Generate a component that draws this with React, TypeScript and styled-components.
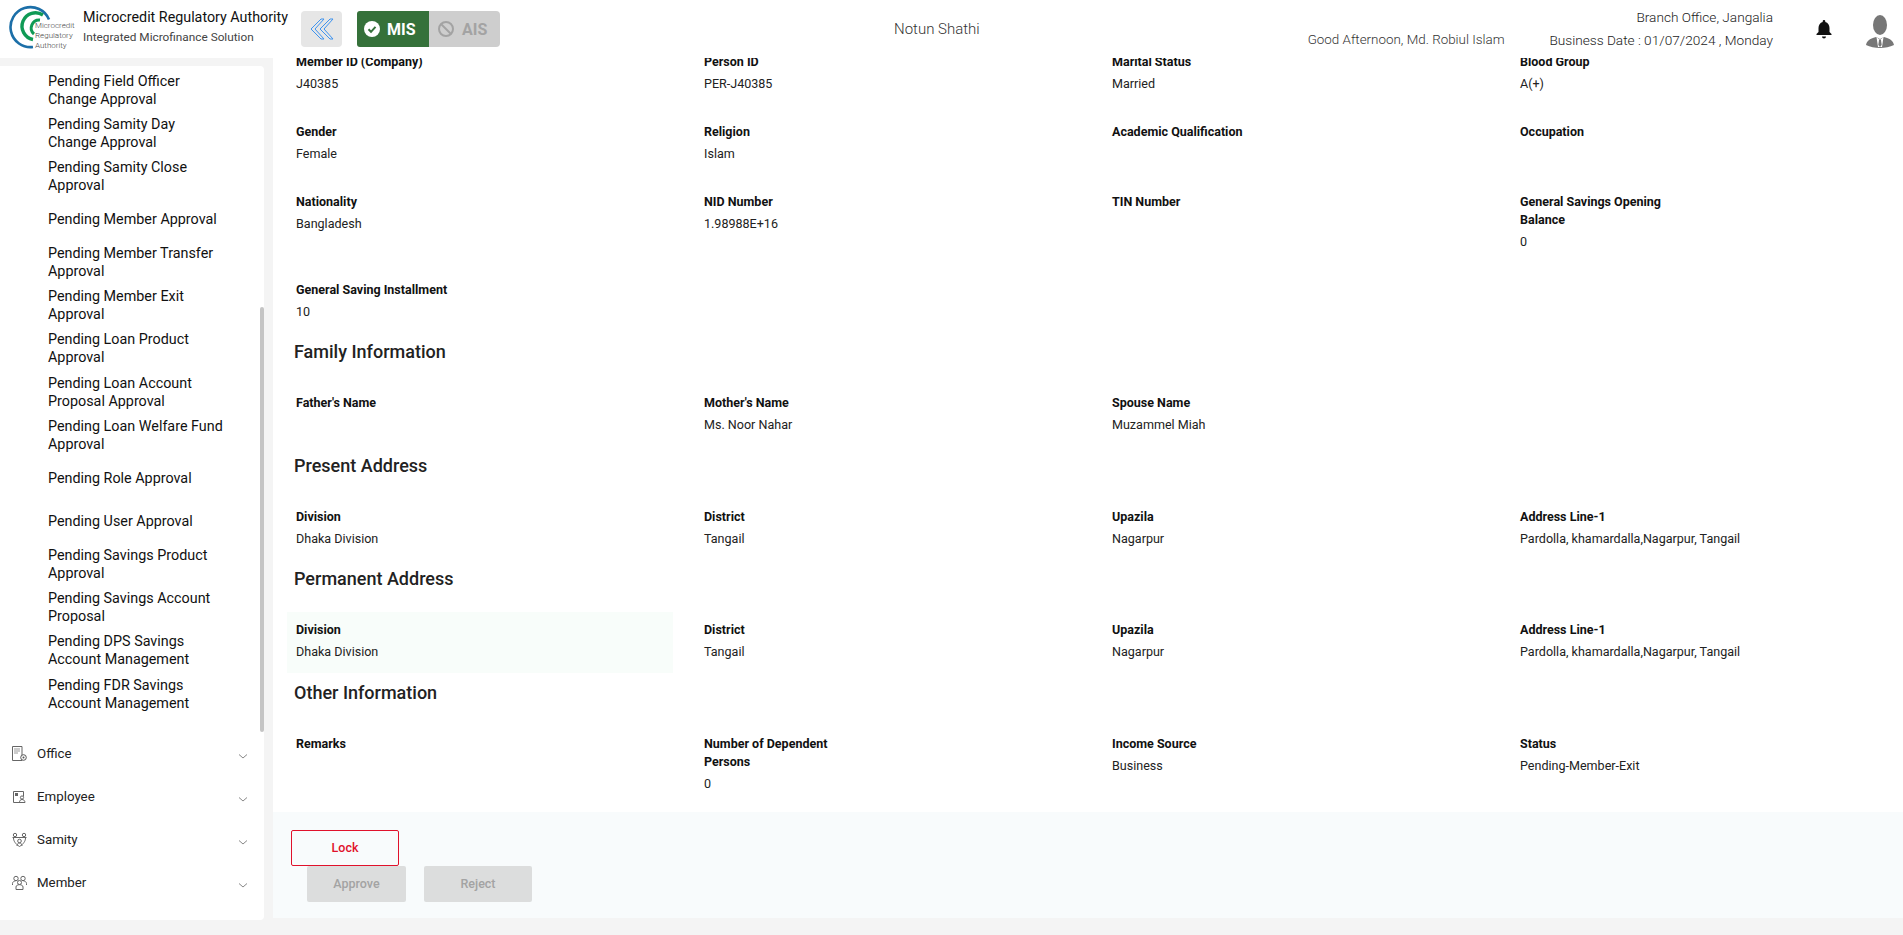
import { createGlobalStyle } from "styled-components";
import styled from "styled-components";

const GlobalStyle = createGlobalStyle`
    html, body {
        margin: 0;
        padding: 0;
        height: 100%;
        overflow: hidden;
        background: #f4f4f4;
        font-family: Roboto, "Liberation Sans", sans-serif;
    }
`

const pendingItems = [
    ["Pending Field Officer", "Change Approval"],
    ["Pending Samity Day", "Change Approval"],
    ["Pending Samity Close", "Approval"],
    ["Pending Member Approval"],
    ["Pending Member Transfer", "Approval"],
    ["Pending Member Exit", "Approval"],
    ["Pending Loan Product", "Approval"],
    ["Pending Loan Account", "Proposal Approval"],
    ["Pending Loan Welfare Fund", "Approval"],
    ["Pending Role Approval"],
    ["Pending User Approval"],
    ["Pending Savings Product", "Approval"],
    ["Pending Savings Account", "Proposal"],
    ["Pending DPS Savings", "Account Management"],
    ["Pending FDR Savings", "Account Management"],
];

const menus = ["Office", "Employee", "Samity", "Member"];

const sections = [
    {
        rows: [
            [["Member ID (Company)", "J40385"], ["Person ID", "PER-J40385"], ["Marital Status", "Married"], ["Blood Group", "A(+)"]],
            [["Gender", "Female"], ["Religion", "Islam"], ["Academic Qualification", ""], ["Occupation", ""]],
            [["Nationality", "Bangladesh"], ["NID Number", "1.98988E+16"], ["TIN Number", ""], ["General Savings Opening Balance", "0"]],
            [["General Saving Installment", "10"]],
        ],
    },
    {
        title: "Family Information",
        rows: [[["Father's Name", ""], ["Mother's Name", "Ms. Noor Nahar"], ["Spouse Name", "Muzammel Miah"]]],
    },
    {
        title: "Present Address",
        rows: [[["Division", "Dhaka Division"], ["District", "Tangail"], ["Upazila", "Nagarpur"], ["Address Line-1", "Pardolla, khamardalla,Nagarpur, Tangail"]]],
    },
    {
        title: "Permanent Address",
        highlight: true,
        rows: [[["Division", "Dhaka Division"], ["District", "Tangail"], ["Upazila", "Nagarpur"], ["Address Line-1", "Pardolla, khamardalla,Nagarpur, Tangail"]]],
    },
    {
        title: "Other Information",
        rows: [[["Remarks", ""], ["Number of Dependent Persons", "0"], ["Income Source", "Business"], ["Status", "Pending-Member-Exit"]]],
    },
];

function Logo() {
    return (
        <LogoWrap>
            <svg width="68" height="50" viewBox="0 0 68 50" fill="none">
                <path d="M41 15.500 A20 20 0 1 0 25 43" stroke="#1c6fa8" strokeWidth="2.600" />
                <path d="M35 11 A13.500 13.500 0 1 0 25 35.500" stroke="#0f9a55" strokeWidth="3.400" />
                <path d="M32 16 A8 8 0 0 0 26 30" stroke="#0f9a55" strokeWidth="3" />
            </svg>
            <LogoText>Microcredit<br />Regulatory<br />Authority</LogoText>
        </LogoWrap>
    );
}

function MenuIcon({ name }: { name: string }) {
    const s = { fill: "none", stroke: "#666", strokeWidth: 1 };
    if (name === "Office") return (
        <svg width="15" height="15" viewBox="0 0 15 15">
            <path d="M.5.500h9.500v14H.5z" {...s} />
            <path d="M2 3h6M2 5h6M2 7h4" stroke="#999" strokeWidth="1" />
            <circle cx="11.500" cy="11.500" r="2.800" fill="#fff" stroke="#555" />
            <circle cx="11.500" cy="11.500" r="1" fill="#555" />
        </svg>
    );
    if (name === "Employee") return (
        <svg width="15" height="15" viewBox="0 0 15 15">
            <path d="M8 13.500H1.500V2.500h10v5" {...s} />
            <path d="M3 4h3v3H3z" fill="#666" />
            <circle cx="10" cy="8.500" r="1.600" {...s} />
            <path d="M7.500 13.500c0-2 1-3 2.500-3s3 1 3 3z" {...s} />
        </svg>
    );
    if (name === "Samity") return (
        <svg width="15" height="15" viewBox="0 0 15 15">
            <circle cx="3" cy="3" r="1.700" {...s} />
            <circle cx="12" cy="3" r="1.700" {...s} />
            <circle cx="7.500" cy="9" r="1.800" {...s} />
            <path d="M.5 5.500h14M1.500 6c0 3 2 6 6 8.500 4-2.500 6-5.500 6-8.500M5 14c0-2 1-3 2.500-3s2.500 1 2.500 3" {...s} />
        </svg>
    );
    return (
        <svg width="15" height="15" viewBox="0 0 15 15">
            <circle cx="4" cy="3.500" r="2.200" {...s} />
            <circle cx="11" cy="3.500" r="2.200" {...s} />
            <circle cx="7.500" cy="7.500" r="2" {...s} />
            <path d="M.5 10V8.500c0-1.500 1.500-2.500 3-2.500M14.500 10V8.500c0-1.500-1.500-2.500-3-2.500M4 14.500v-2.500c0-1.500 1.500-2.300 3.500-2.300s3.500.8 3.500 2.300v2.500z" {...s} />
        </svg>
    );
}

function App() {
    return (
        <Page>
            <GlobalStyle />
            <Header>
                <Logo />
                <Titles>
                    <OrgName>Microcredit Regulatory Authority</OrgName>
                    <OrgSub>Integrated Microfinance Solution</OrgSub>
                </Titles>
                <CollapseButton>
                    <svg width="26" height="24" viewBox="0 0 26 24" fill="none" stroke="#3f93ee" strokeWidth="1">
                        <path d="M12 2 2 12l10 10h3L6 12l9-10zM21 2 11 12l10 10h3L15 12l9-10z" strokeLinejoin="round" />
                    </svg>
                </CollapseButton>
                <ModeSwitch>
                    <ModeOn>
                        <svg width="16" height="16" viewBox="0 0 16 16">
                            <circle cx="8" cy="8" r="8" fill="#fff" />
                            <path d="M4.500 8.300 7 10.800l4.500-5" fill="none" stroke="#35713a" strokeWidth="2" />
                        </svg>
                        MIS
                    </ModeOn>
                    <ModeOff>
                        <svg width="16" height="16" viewBox="0 0 16 16" fill="none" stroke="#a3a3a3" strokeWidth="2">
                            <circle cx="8" cy="8" r="7" />
                            <path d="M3 3l10 10" />
                        </svg>
                        AIS
                    </ModeOff>
                </ModeSwitch>
                <CenterTitle>Notun Shathi</CenterTitle>
                <Greeting>Good Afternoon, Md. Robiul Islam</Greeting>
                <BranchInfo>
                    <span>Branch Office, Jangalia</span>
                    <span>Business Date : 01/07/2024 , Monday</span>
                </BranchInfo>
                <BellWrap>
                    <svg width="16" height="19" viewBox="0 0 16 19" fill="#111">
                        <path d="M8 0c-.8 0-1.300.6-1.300 1.400v.6C4 2.700 2.500 5 2.500 8v4L.5 14v1h15v-1l-2-2V8c0-3-1.500-5.300-4.200-6v-.6C9.300.6 8.800 0 8 0z" />
                        <path d="M6 16.500h4c0 1.200-.9 2-2 2s-2-.8-2-2z" />
                    </svg>
                </BellWrap>
                <Avatar>
                    <svg width="28" height="33" viewBox="0 0 28 33" fill="#777">
                        <ellipse cx="14" cy="10" rx="7" ry="10" />
                        <path d="M0 30c1-4 3-6 10-8l4 2 4-2c7 2 9 4 10 8-4 2-9 3-14 3S4 32 0 30z" />
                        <path d="M10.500 22 14 25l3.500-3-1.500 10h-4z" fill="#fff" />
                        <path d="M13 25h2l.7 5-1.700 2-1.700-2z" />
                    </svg>
                </Avatar>
            </Header>
            <Body>
                <Sidebar>
                    <SubMenu>
                        {pendingItems.map(item => (
                            <PendingItem key={item.join()}>
                                {item.map(line => <div key={line}>{line}</div>)}
                            </PendingItem>
                        ))}
                        <ScrollThumb />
                    </SubMenu>
                    {menus.map(name => (
                        <MenuRow key={name}>
                            <MenuIcon name={name} />
                            <MenuLabel>{name}</MenuLabel>
                            <Chevron width="12" height="12" viewBox="0 0 12 12" fill="none" stroke="#888">
                                <path d="M2 4.500 6 8l4-3.500" />
                            </Chevron>
                        </MenuRow>
                    ))}
                </Sidebar>
                <Main>
                    <Details>
                        <ScrolledContent>
                            {sections.map((section, i) => (
                                <section key={i}>
                                    {section.title && <SectionTitle>{section.title}</SectionTitle>}
                                    {section.rows.map((row, j) => (
                                        <Row key={j}>
                                            {row.map(([label, value], k) => (
                                                <Field key={label} $highlight={section.highlight && k === 0}>
                                                    <Label>{label}</Label>
                                                    <Value>{value}</Value>
                                                </Field>
                                            ))}
                                        </Row>
                                    ))}
                                </section>
                            ))}
                        </ScrolledContent>
                    </Details>
                    <Footer>
                        <LockButton>Lock</LockButton>
                        <Actions>
                            <DisabledButton $width={99}>Approve</DisabledButton>
                            <DisabledButton $width={108}>Reject</DisabledButton>
                        </Actions>
                    </Footer>
                </Main>
            </Body>
        </Page>
    );
}

const Page = styled.div`
    width: 1903px;
    height: 935px;
    display: flex;
    flex-direction: column;
    overflow: hidden;
    background: #f4f4f4;
`

const Header = styled.header`
    height: 58px;
    flex: none;
    display: flex;
    align-items: center;
    padding-right: 9px;
    box-sizing: border-box;
    background: #fff;
`

const LogoWrap = styled.div`
    position: relative;
    width: 75px;
    height: 50px;
    margin-left: 8px;
    flex: none;
`

const LogoText = styled.div`
    position: absolute;
    left: 27px;
    top: 17px;
    font-size: 8px;
    line-height: 10px;
    font-weight: 300;
    color: #444;
`

const Titles = styled.div`
    width: 218px;
    flex: none;
    padding-bottom: 4px;
`

const OrgName = styled.div`
    font-size: 14.3px;
    line-height: 20px;
    color: #111;
`

const OrgSub = styled.div`
    font-size: 11.8px;
    line-height: 20px;
    color: #444;
`

const CollapseButton = styled.div`
    width: 41px;
    height: 36px;
    flex: none;
    display: flex;
    align-items: center;
    justify-content: center;
    background: #e6e6e6;
    border-radius: 4px;
`

const ModeSwitch = styled.div`
    display: flex;
    width: 143px;
    height: 36px;
    margin-left: 15px;
    flex: none;
    background: #cecece;
    border-radius: 4px;
    font-size: 16px;
    font-weight: 700;
`

const ModeOn = styled.div`
    width: 72px;
    box-sizing: border-box;
    padding-left: 7px;
    display: flex;
    align-items: center;
    gap: 7px;
    background: #35713a;
    color: #fff;
    border-radius: 3px 0 0 3px;
`

const ModeOff = styled.div`
    flex: 1;
    padding-left: 9px;
    display: flex;
    align-items: center;
    gap: 8px;
    color: #a3a3a3;
`

const CenterTitle = styled.div`
    margin-left: 394px;
    font-size: 15px;
    font-weight: 300;
    color: #333;
    flex: none;
`

const Greeting = styled.div`
    margin-left: 328px;
    padding-top: 21px;
    font-size: 13.4px;
    font-weight: 300;
    color: #333;
    flex: none;
`

const BranchInfo = styled.div`
    margin-left: auto;
    display: flex;
    flex-direction: column;
    gap: 7px;
    padding-bottom: 2px;
    align-items: flex-end;
    font-size: 13.65px;
    line-height: 16px;
    font-weight: 300;
    color: #222;
    flex: none;
`

const BellWrap = styled.div`
    margin-left: 43px;
    flex: none;
    display: flex;
`

const Avatar = styled.div`
    margin-left: 34px;
    padding-top: 4px;
    flex: none;
    display: flex;
`

const Body = styled.div`
    flex: 1;
    min-height: 0;
    display: flex;
    align-items: flex-start;
`

const Sidebar = styled.aside`
    width: 264px;
    height: 854px;
    margin-top: 8px;
    flex: none;
    background: #fff;
    border-radius: 0 4px 4px 0;
`

const SubMenu = styled.div`
    position: relative;
    height: 666px;
    padding-top: 3px;
    box-sizing: border-box;
    overflow: hidden;
`

const ScrollThumb = styled.div`
    position: absolute;
    right: 0;
    top: 241px;
    width: 4px;
    height: 425px;
    background: #c4c4c4;
    border-radius: 2px;
`

const PendingItem = styled.div`
    height: 43.15px;
    display: flex;
    flex-direction: column;
    justify-content: center;
    padding-left: 48px;
    font-size: 14.35px;
    line-height: 18px;
    color: #111;
`

const MenuRow = styled.div`
    height: 43px;
    display: flex;
    align-items: center;
    gap: 10px;
    padding: 0 15px 0 12px;
`

const MenuLabel = styled.span`
    flex: 1;
    font-size: 13.3px;
    color: #222;
`

const Chevron = styled.svg`
    transform: translateY(2px);
`

const Main = styled.main`
    width: 1630px;
    height: 860px;
    margin-left: 9px;
    flex: none;
    display: flex;
    flex-direction: column;
    background: #fff;
`

const Details = styled.div`
    height: 754px;
    flex: none;
    overflow: hidden;
    padding-left: 14px;
    box-sizing: border-box;
`

const ScrolledContent = styled.div`
    margin-top: -14px;
`

const SectionTitle = styled.h3`
    margin: -1.6px 0 21px;
    padding-left: 7px;
    font-size: 18px;
    line-height: 24px;
    font-weight: 500;
    color: #222;
`

const Row = styled.div`
    display: grid;
    grid-template-columns: repeat(4, 408px);
    margin-bottom: 9px;
`

const Field = styled.div<{ $highlight?: boolean }>`
    width: 386px;
    padding: 9px 9px 12px;
    box-sizing: border-box;
    background: ${(props) => props.$highlight ? "#f8fdfa" : "transparent"};
`

const Label = styled.div`
    max-width: 170px;
    font-size: 12.5px;
    line-height: 18px;
    font-weight: 700;
    color: #111;
`

const Value = styled.div`
    margin-top: 3px;
    min-height: 19px;
    font-size: 12.55px;
    line-height: 19px;
    color: #222;
`

const Footer = styled.div`
    height: 106px;
    flex: none;
    box-sizing: border-box;
    padding: 18px 0 0 18px;
    background: #f8fbfc;
`

const LockButton = styled.div`
    width: 108px;
    height: 36px;
    box-sizing: border-box;
    padding-bottom: 1px;
    display: flex;
    align-items: center;
    justify-content: center;
    border: 1px solid #e0112b;
    border-radius: 2px;
    font-size: 12.5px;
    font-weight: 500;
    color: #e0112b;
`

const Actions = styled.div`
    display: flex;
    gap: 18px;
    margin-left: 16px;
`

const DisabledButton = styled.div<{ $width: number }>`
    width: ${(props) => props.$width}px;
    height: 36px;
    box-sizing: border-box;
    padding-bottom: 1px;
    display: flex;
    align-items: center;
    justify-content: center;
    background: #dcdddd;
    border-radius: 2px;
    font-size: 12.5px;
    font-weight: 500;
    color: #a3a3a3;
`

export default App;
